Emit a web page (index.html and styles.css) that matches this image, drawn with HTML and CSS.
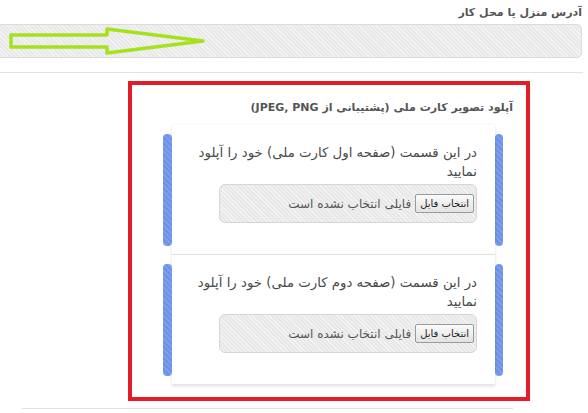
FILE: index.html
```html
<!DOCTYPE html>
<html lang="fa" dir="rtl">
<head>
    <meta charset="UTF-8">
    <meta name="viewport" content="width=device-width, initial-scale=1.0">
    <title>اطلاعات کاربر</title>
    <link rel="stylesheet" href="styles.css">
</head>
<body>
    <div class="page">
        <div class="field">
            <label class="field-label">آدرس منزل یا محل کار</label>
            <div class="text-input">
                <!-- green pointer arrow drawn over the address box -->
                <svg class="pointer" width="200" height="30" viewBox="0 0 200 30">
                    <polygon points="3,9 99,9 99,3 195,15 99,27 99,21 3,21"
                             fill="none" stroke="#a7e01c" stroke-width="3.5" stroke-linejoin="round"/>
                </svg>
            </div>
        </div>

        <hr class="divider">

        <section class="upload-box">
            <h3 class="upload-title">آپلود تصویر کارت ملی (پشتیبانی از JPEG, PNG)</h3>

            <div class="upload-card">
                <span class="bar"></span>
                <div class="card-body">
                    <p class="card-text">در این قسمت (صفحه اول کارت ملی) خود را آپلود نمایید</p>
                    <div class="file-box">
                        <button type="button" class="file-btn">انتخاب فایل</button>
                        <span class="file-name">فایلی انتخاب نشده است</span>
                    </div>
                </div>
                <span class="bar"></span>
            </div>

            <div class="upload-card">
                <span class="bar"></span>
                <div class="card-body">
                    <p class="card-text">در این قسمت (صفحه دوم کارت ملی) خود را آپلود نمایید</p>
                    <div class="file-box">
                        <button type="button" class="file-btn">انتخاب فایل</button>
                        <span class="file-name">فایلی انتخاب نشده است</span>
                    </div>
                </div>
                <span class="bar"></span>
            </div>
        </section>

        <hr class="divider bottom">
    </div>
</body>
</html>
```

FILE: styles.css
```css
body {
    margin: 0;
    font-family: "DejaVu Sans", Tahoma, sans-serif;
    background: #fff;
    color: #4a4a4a;
    overflow: hidden;
}
.page {
    width: 588px;
}
.field {
    padding: 6px 6px 0 0;
}
.field-label {
    display: block;
    font-size: 11px;
    font-weight: bold;
    color: #555;
    line-height: 14px;
}
.text-input {
    display: flex;
    justify-content: flex-end; /* arrow sits on the left side */
    align-items: center;
    height: 32px;
    margin: 4px 0 0 -10px;
    border: 1px solid #dcdcdc;
    border-radius: 5px;
    background: repeating-linear-gradient(45deg, #f4f4f4 0 1px, #e9e9e9 1px 3px);
}
.pointer {
    margin-left: 17px;
}
.divider {
    border: none;
    border-top: 1px solid #e3e3e3;
    margin: 14px 5px 0 0;
}
.divider.bottom {
    margin: 7px 75px 0 22px;
}
.upload-box {
    margin: 8px 58px 0 128px;
    border: 4px solid #e31d27;
    padding: 15px 23px 12px 31px;
}
.upload-title {
    margin: 0 -10px 9px 0;
    font-size: 11px;
    font-weight: bold;
    color: #555;
    line-height: 16px;
}
.upload-card {
    display: flex;
}
.bar {
    width: 8px;
    margin: 9px 0;
    border-radius: 4px;
    background: repeating-linear-gradient(45deg, #6c91e6 0 2px, #7d9eec 2px 4px);
}
.bar:last-child {
    width: 9px;
}
.card-body {
    flex: 1;
    background: #fff;
    padding: 18px 18px 31px 18px;
    box-shadow: 0 1px 3px rgba(0, 0, 0, 0.14);
    border-bottom: 1px solid #e6e6e6;
}
.card-text {
    margin: 0 0 3px 0;
    font-size: 13.3px;
    line-height: 19px;
    color: #4a4a4a;
}
.file-box {
    display: flex;
    align-items: center;
    gap: 4px;
    width: 252px;
    height: 37px;
    padding: 0 2px;
    border: 1px solid #d6d6d6;
    border-radius: 6px;
    background: repeating-linear-gradient(45deg, #f4f4f4 0 1px, #e8e8e8 1px 3px);
}
.file-btn {
    height: 19px;
    padding: 0 4px;
    font-family: Tahoma, "DejaVu Sans", sans-serif;
    font-size: 10px;
    color: #222;
    border: 1px solid #9a9a9a;
    border-radius: 2px;
    background: linear-gradient(#fbfbfb, #e2e2e2);
}
.file-name {
    font-size: 12px;
    color: #555;
}
```
